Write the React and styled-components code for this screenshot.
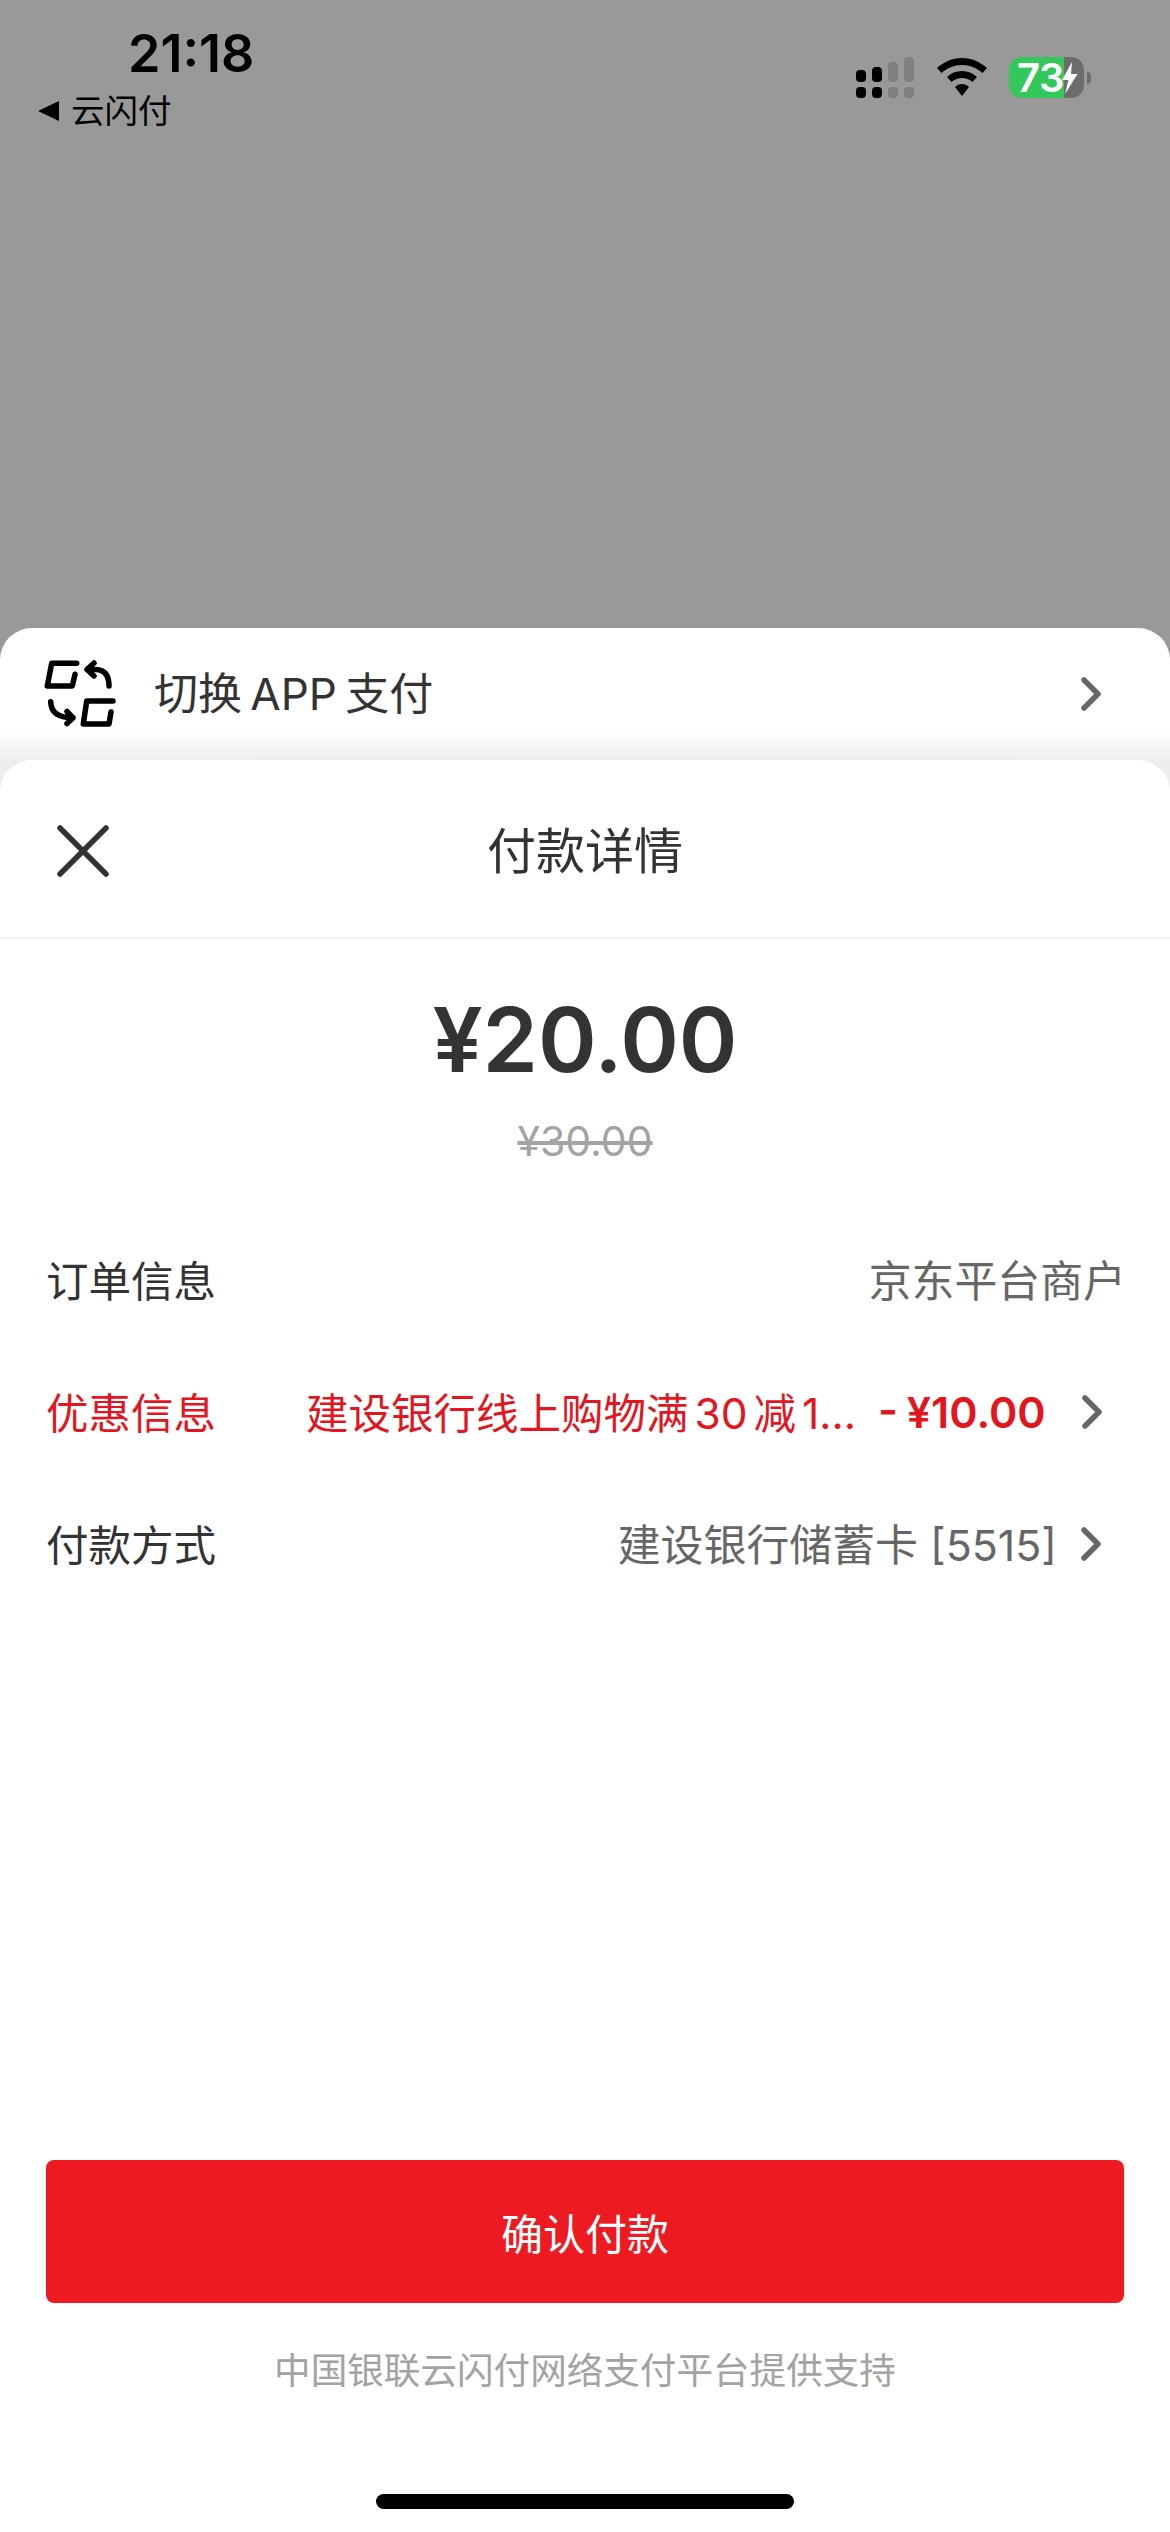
import React from "react";
import styled, { createGlobalStyle } from "styled-components";

const FONT = `Inter, "Noto Sans CJK SC", sans-serif`;

const GlobalStyle = createGlobalStyle`
  html, body {
    margin: 0;
    padding: 0;
    background: #fff;
  }
  * {
    box-sizing: border-box;
  }
`;

const Page = styled.div`
  width: 1170px;
  height: 2532px;
  overflow: hidden;
  display: flex;
  flex-direction: column;
  background: #999999;
  font-family: ${FONT};
  color: #333;
`;

const Backdrop = styled.div`
  height: 628px;
  flex: none;
  display: flex;
  justify-content: space-between;
  align-items: flex-start;
  padding: 26px 79px 0 38px;
`;

const Clock = styled.div`
  display: flex;
  flex-direction: column;
`;

const Time = styled.div`
  margin-left: 90px;
  font-size: 52px;
  line-height: 56px;
  font-weight: 600;
  color: #000;
`;

const BackLink = styled.div`
  display: flex;
  align-items: center;
  gap: 12px;
  margin-top: 7px;
  font-size: 33.5px;
  line-height: 44px;
  color: #000;
`;

const BackArrow = styled.span`
  width: 0;
  height: 0;
  border-style: solid;
  border-width: 10px 21px 10px 0;
  border-color: transparent #000 transparent transparent;
`;

const Indicators = styled.div`
  display: flex;
  align-items: flex-start;
  margin-top: 31px;
  margin-left: auto;
`;

const Signal = styled.svg`
  width: 58px;
  height: 41px;
  margin-right: 23px;
`;

const Wifi = styled.svg`
  width: 50px;
  height: 38px;
  margin-top: 1px;
  margin-right: 22px;
`;

const Battery = styled.div`
  width: 75px;
  height: 41px;
  border-radius: 13px;
  background: linear-gradient(90deg, #34c759 0 55px, #6d6d6d 55px);
  display: flex;
  align-items: center;
  padding-left: 8px;
  color: #fff;
  font-size: 40px;
  font-weight: 600;
  line-height: 41px;
  letter-spacing: -0.5px;
`;

const Bolt = styled.svg`
  width: 16px;
  height: 32px;
  flex: none;
  margin-left: -2px;
`;

const BatteryNub = styled.span`
  width: 4px;
  height: 12px;
  margin: 15px 0 0 3px;
  border-radius: 0 4px 4px 0;
  background: #6d6d6d;
`;

const OuterSheet = styled.div`
  flex: 1;
  display: flex;
  flex-direction: column;
  border-radius: 32px 32px 0 0;
  background: linear-gradient(#fff 0 104px, #eeeeee 132px);
`;

const SwitchRow = styled.div`
  height: 132px;
  flex: none;
  display: flex;
  align-items: flex-start;
  padding: 28px 0 0 40px;
`;

const SwitchLabel = styled.div`
  margin-left: 34px;
  font-size: 44px;
  word-spacing: -4px;
  line-height: 58px;
  margin-top: 9px;
  flex: 1;
  color: #333;
`;

const Chevron = styled.svg`
  width: 20px;
  height: 34px;
  flex: none;
  fill: none;
  stroke: #666;
  stroke-width: 5.5;
  stroke-linecap: round;
  stroke-linejoin: round;
`;

const SwitchChevron = styled(Chevron)`
  margin: 21px 69px 0 0;
`;

const InnerSheet = styled.div`
  flex: 1;
  display: flex;
  flex-direction: column;
  border-radius: 32px 32px 0 0;
  background: #fff;
`;

const SheetHeader = styled.div`
  height: 179px;
  flex: none;
  position: relative;
  display: flex;
  align-items: center;
  justify-content: center;
  padding-bottom: 2px;
  border-bottom: 2px solid #f1f1f1;
  font-size: 49px;
  color: #333;
`;

const CloseIcon = styled.svg`
  position: absolute;
  left: 56px;
  top: 64px;
  width: 54px;
  height: 54px;
  fill: none;
  stroke: #333;
  stroke-width: 5.5;
  stroke-linecap: round;
`;

const Price = styled.div`
  margin-top: 48px;
  text-align: center;
  font-size: 89px;
  line-height: 106px;
  font-weight: 600;
  color: #333;
`;

const OldPrice = styled.div`
  margin-top: 24px;
  text-align: center;
  font-size: 41px;
  line-height: 48px;
  color: #a3a3a3;
  text-decoration: line-through;
`;

const Rows = styled.div`
  margin-top: 47px;
  padding: 0 44px 0 46px;
  display: flex;
  flex-direction: column;
`;

const Row = styled.div`
  height: 132px;
  display: flex;
  align-items: center;
  font-size: 42.5px;
  color: ${(p) => (p.$accent ? "#e3161f" : "#333")};
`;

const RowLabel = styled.div`
  flex: none;
  width: 260px;
`;

const RowValue = styled.div`
  flex: 1;
  display: flex;
  justify-content: flex-end;
  align-items: center;
  white-space: nowrap;
  font-size: ${(p) => (p.$accent ? "42.5px" : "42.9px")};
  word-spacing: ${(p) => (p.$accent ? "-6px" : "0")};
  color: ${(p) => (p.$accent ? "#e3161f" : "#666")};
`;

const Discount = styled.span`
  font-size: 43px;
  font-weight: 600;
  margin: 3px 0 0 22px;
  word-spacing: -2px;
`;

const ValueChevron = styled(Chevron)`
  margin: 3px 25px 0 ${(p) => p.$gap}px;
`;

const Footer = styled.div`
  margin-top: auto;
  padding: 0 46px 23px;
  display: flex;
  flex-direction: column;
  align-items: center;
`;

const PayButton = styled.button`
  width: 100%;
  height: 143px;
  border: 0;
  border-radius: 8px;
  background: #ee1a21;
  color: #fff;
  font-family: ${FONT};
  font-size: 42px;
`;

const Credit = styled.div`
  margin-top: 46px;
  font-size: 36.6px;
  line-height: 44px;
  color: #a3a3a3;
  white-space: nowrap;
`;

const HomeBar = styled.div`
  margin-top: 101px;
  width: 418px;
  height: 15px;
  border-radius: 8px;
  background: #000;
`;

const SwitchIcon = () => (
  <svg width="80" height="76" viewBox="40 655 80 76" fill="none" stroke="#000" strokeWidth="5.5" strokeLinecap="round" strokeLinejoin="round">
    <path d="M76.7 662.3 H51.7 L47.3 685 H72.3 L75 673.3" />
    <path d="M94 662 L87 668.5 L94 675 M87 668.5 H96 Q109 669 109 685" />
    <path d="M113 700 H86.7 L83.3 723 H109 L111 711" />
    <path d="M50.7 700.7 Q51 716.7 73 716.7 M67 710.5 L73 716.7 L67 722.5" />
  </svg>
);

export default function App() {
  return (
    <Page>
      <GlobalStyle />
      <Backdrop>
        <Clock>
          <Time>21:18</Time>
          <BackLink>
            <BackArrow />
            云闪付
          </BackLink>
        </Clock>
        <Indicators>
          <Signal viewBox="0 0 58 41">
            <g fill="#000">
              <rect x="0" y="13" width="10" height="12" rx="4" />
              <rect x="16" y="10" width="10" height="15" rx="4" />
              <rect x="0" y="30" width="10" height="11" rx="4" />
              <rect x="16" y="30" width="10" height="11" rx="4" />
            </g>
            <g fill="#808080">
              <rect x="32" y="5" width="10" height="20" rx="4" />
              <rect x="48" y="0" width="10" height="25" rx="4" />
              <rect x="32" y="30" width="10" height="11" rx="4" />
              <rect x="48" y="30" width="10" height="11" rx="4" />
            </g>
          </Signal>
          <Wifi viewBox="0 0 50 38">
            <path fill="#000" d="M25 0 C35 0 43 4 50 10 L45.5 15 C40 10 33 7 25 7 C17 7 10 10 4.5 15 L0 10 C7 4 15 0 25 0 Z" />
            <path fill="#000" d="M25 13 C31 13 36 15 40 19 L35.5 24 C32.5 21.5 29 20 25 20 C21 20 17.5 21.5 14.5 24 L10 19 C14 15 19 13 25 13 Z" />
            <path fill="#000" d="M25 26 C27.5 26 30 27 32 29 L25 38 L18 29 C20 27 22.5 26 25 26 Z" />
          </Wifi>
          <Battery>
            73
            <Bolt viewBox="0 0 16 32">
              <path fill="#fff" d="M10 0 L0 18 H6.5 L3 32 L15.5 12 H9 Z" />
            </Bolt>
          </Battery>
          <BatteryNub />
        </Indicators>
      </Backdrop>

      <OuterSheet>
        <SwitchRow>
          <SwitchIcon />
          <SwitchLabel>切换 APP 支付</SwitchLabel>
          <SwitchChevron viewBox="0 0 20 34">
            <path d="M3 3 L17 17 L3 31" />
          </SwitchChevron>
        </SwitchRow>

        <InnerSheet>
          <SheetHeader>
            <CloseIcon viewBox="0 0 54 54">
              <path d="M4 4 L50 50 M50 4 L4 50" />
            </CloseIcon>
            付款详情
          </SheetHeader>

          <Price>¥20.00</Price>
          <OldPrice>¥30.00</OldPrice>

          <Rows>
            <Row>
              <RowLabel>订单信息</RowLabel>
              <RowValue>京东平台商户</RowValue>
            </Row>
            <Row $accent>
              <RowLabel>优惠信息</RowLabel>
              <RowValue $accent>
                建设银行线上购物满 30 减 1...
                <Discount>- ¥10.00</Discount>
              </RowValue>
              <ValueChevron $gap={36} viewBox="0 0 20 34">
                <path d="M3 3 L17 17 L3 31" />
              </ValueChevron>
            </Row>
            <Row>
              <RowLabel>付款方式</RowLabel>
              <RowValue>建设银行储蓄卡 [5515]</RowValue>
              <ValueChevron $gap={24} viewBox="0 0 20 34">
                <path d="M3 3 L17 17 L3 31" />
              </ValueChevron>
            </Row>
          </Rows>

          <Footer>
            <PayButton>确认付款</PayButton>
            <Credit>中国银联云闪付网络支付平台提供支持</Credit>
            <HomeBar />
          </Footer>
        </InnerSheet>
      </OuterSheet>
    </Page>
  );
}
